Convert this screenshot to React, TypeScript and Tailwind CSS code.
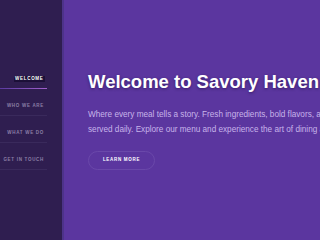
import React from "react";

export default function App() {
  const items = ["WHO WE ARE", "WHAT WE DO", "GET IN TOUCH"];
  return (
    <div className="w-[320px] h-[240px] flex overflow-hidden bg-[#5b369f]" style={{ fontFamily: '"Liberation Sans", Arial, sans-serif' }}>
      <aside className="w-[64px] shrink-0 h-full bg-[#2f1e50] border-r-2 border-[#4d3389] flex flex-col pt-[76px]">
        <div className="pr-[17px] flex flex-col items-end">
          <span className="text-[4.5px] font-bold tracking-[0.7px] text-white bg-[#1c1038] px-[1.5px] leading-[6px]">WELCOME</span>
        </div>
        <div className="mt-[6px] h-[1px] w-[47px] bg-gradient-to-r from-[#5b3aa0] to-[#a060cc]" />
        {items.map((t) => (
          <div key={t} className="flex flex-col">
            <div className="pr-[18px] flex justify-end mt-[14px]">
              <span className="text-[4.5px] font-bold tracking-[0.7px] text-[#8c7ea6] leading-[6px]">{t}</span>
            </div>
            <div className="mt-[6px] h-[1px] w-[47px] bg-[#3a2a5c]" />
          </div>
        ))}
      </aside>
      <main className="flex-1 min-w-0 pl-[24px] pt-[71px] overflow-hidden">
        <h1 className="text-[18.5px] leading-[22px] font-bold text-white whitespace-nowrap [text-shadow:0_1px_3px_rgba(20,0,50,0.5)]">
          Welcome to Savory Haven
        </h1>
        <p className="mt-[14px] text-[8.2px] leading-[15px] text-[#c7b4ea] whitespace-nowrap">
          Where every meal tells a story. Fresh ingredients, bold flavors, and unforgettable moments
          <br />
          served daily. Explore our menu and experience the art of dining at its finest.
        </p>
        <button className="mt-[14px] w-[67px] h-[19px] rounded-full border border-[#6a48aa] text-white text-[4.5px] font-bold tracking-[0.7px] flex items-center justify-center">
          LEARN MORE
        </button>
      </main>
    </div>
  );
}
